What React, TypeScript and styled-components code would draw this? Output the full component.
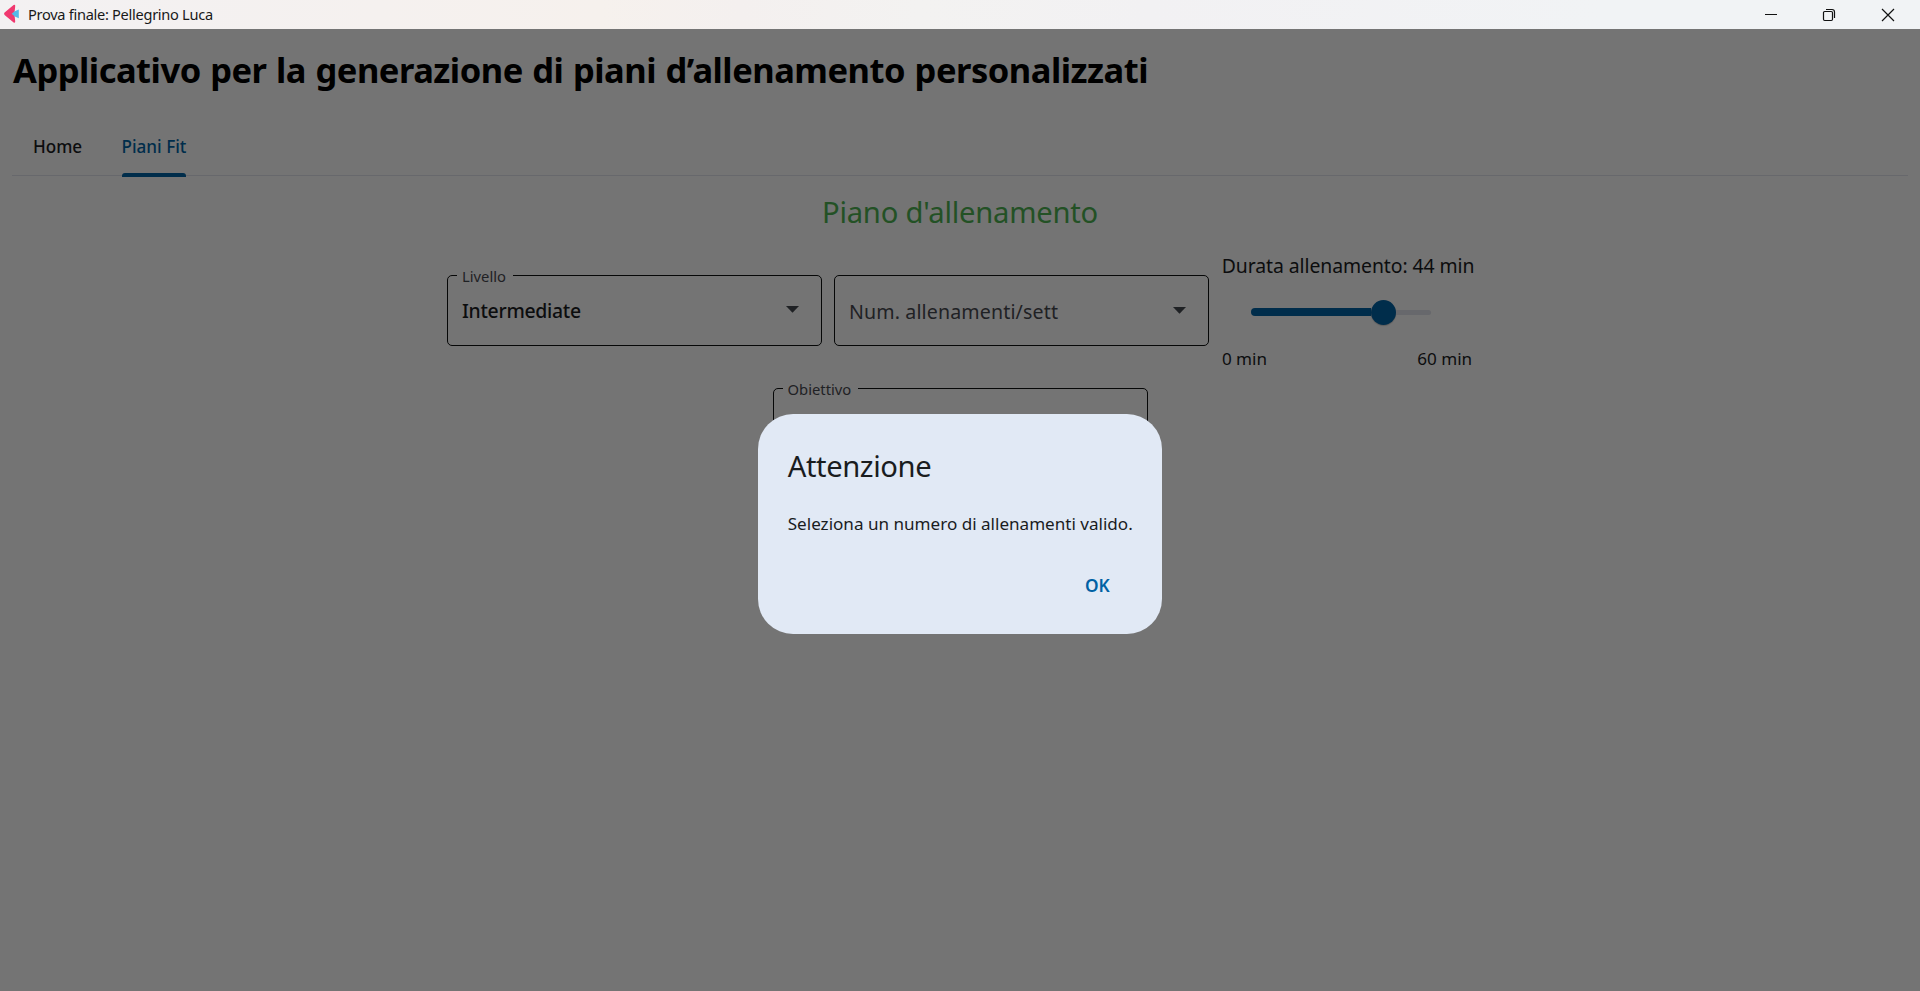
import React from 'react';
import styled, { createGlobalStyle } from 'styled-components';

const GlobalStyle = createGlobalStyle`
  * { box-sizing: border-box; }
  html, body { margin: 0; height: 100%; overflow: hidden; }
  body { font-family: "Noto Sans", "Open Sans", sans-serif; background: #747474; }
`;

const Window = styled.div`
  display: flex;
  flex-direction: column;
  width: 100%;
  height: 991px;
`;

const TitleBar = styled.header`
  display: flex;
  align-items: center;
  justify-content: space-between;
  height: 29px;
  flex: none;
  padding: 0 3px 0 4px;
  background: linear-gradient(90deg, #f3f1f2 0, #f5f1ef 380px, #f6f1ed 600px, #f4f0ef 740px, #f3f2f1 920px, #f2f1f3 1150px, #f1f3f5 1600px);
`;

const Caption = styled.div`
  display: flex;
  align-items: center;
  gap: 8px;
  height: 27px;
  margin-bottom: 2px;
  font-size: 14.6px;
  line-height: 20px;
  letter-spacing: -0.293px;
  color: #191919;
`;

const WindowButtons = styled.div`
  display: flex;
`;

const WindowButton = styled.button`
  display: flex;
  align-items: center;
  justify-content: center;
  width: 58.5px;
  height: 28px;
  padding: 0;
  border: 0;
  background: none;
`;

const Page = styled.main`
  position: relative;
  flex: 1;
  display: flex;
  flex-direction: column;
  padding: 17px 12px 0;
  background: #747474;
`;

const PageTitle = styled.h1`
  margin: 0 0 23px 1px;
  font-size: 34.5px;
  line-height: 48px;
  font-weight: 700;
  letter-spacing: -0.49px;
  word-spacing: 1px;
  color: #000;
`;

const TabBar = styled.nav`
  display: flex;
  gap: 39.5px;
  height: 59px;
  padding: 18px 21px 0;
  border-bottom: 1px solid #67686c;
`;

const Tab = styled.div<{ $active?: boolean }>`
  height: 42px;
  font-size: 17.1px;
  line-height: 24px;
  font-weight: 500;
  letter-spacing: ${p => (p.$active ? '0' : '-0.05px')};
  color: ${p => (p.$active ? '#002d4b' : '#0c0d0e')};
  &::after {
    content: '';
    display: block;
    height: 4px;
    margin-top: 14px;
    border-radius: 3px 3px 0 0;
    background: ${p => (p.$active ? '#002d4b' : 'transparent')};
  }
`;

const SectionTitle = styled.h2`
  margin: 16px 0 0;
  text-align: center;
  font-size: 29.2px;
  line-height: 40px;
  font-weight: 400;
  letter-spacing: -0.24px;
  color: #235125;
`;

const Filters = styled.section`
  display: flex;
  justify-content: center;
  gap: 12px;
  margin-top: 20px;
`;

const GoalRow = styled.section`
  display: flex;
  justify-content: center;
  margin-top: 7px;
`;

const Field = styled.fieldset<{ $labelled?: boolean; $top: number }>`
  width: 375px;
  height: ${p => (p.$labelled ? '81px' : '71px')};
  margin: ${p => p.$top}px 0 0;
  padding: 0 22px 0 14px;
  border: 1px solid #060707;
  border-radius: 5px;
  min-width: 0;
`;

const FieldLabel = styled.legend`
  height: 20px;
  margin-left: -5px;
  padding: 0 7px 0 5px;
  font-size: 14.8px;
  line-height: 22px;
  color: #1f2124;
`;

const FieldBody = styled.div<{ $top: number; $filled?: boolean }>`
  display: flex;
  align-items: center;
  justify-content: space-between;
  padding-top: ${p => p.$top}px;
  font-size: ${p => (p.$filled ? '19.4px' : '19.6px')};
  line-height: 28px;
  font-weight: ${p => (p.$filled ? 500 : 400)};
  letter-spacing: ${p => (p.$filled ? '-0.28px' : '0.13px')};
  color: ${p => (p.$filled ? '#0c0d0e' : '#1f2124')};
`;

const ArrowIcon = styled.svg`
  display: block;
  margin-bottom: 3px;
`;

const Duration = styled.div`
  display: flex;
  flex-direction: column;
  width: 252px;
`;

const DurationLabel = styled.div`
  padding-left: 0.7px;
  font-size: 19.4px;
  line-height: 28px;
  letter-spacing: -0.07px;
  white-space: nowrap;
  color: #0c0d0e;
`;

const Slider = styled.div`
  display: flex;
  align-items: center;
  height: 26px;
  margin: 19px 0 0 30px;
`;

const ActiveTrack = styled.div`
  width: 120px;
  height: 8px;
  border-radius: 4px 0 0 4px;
  background: #002d4b;
`;

const Thumb = styled.div`
  width: 25px;
  height: 25px;
  border-radius: 50%;
  background: #002d4b;
  box-shadow: 0 1px 1px rgba(0, 0, 0, 0.2);
`;

const RestTrack = styled.div`
  width: 35px;
  height: 5px;
  border-radius: 0 3px 3px 0;
  background: #67686c;
`;

const Range = styled.div`
  display: flex;
  justify-content: space-between;
  margin-top: 22px;
  padding: 0 1px;
  font-size: 17.1px;
  line-height: 24px;
  letter-spacing: -0.05px;
  color: #0c0d0e;
`;

const Scrim = styled.div`
  position: absolute;
  inset: 0;
  display: flex;
  align-items: flex-start;
  justify-content: center;
  padding-top: 385px;
`;

const Dialog = styled.div`
  display: flex;
  flex-direction: column;
  width: 404.5px;
  height: 220px;
  padding: 32px 30px 0;
  border-radius: 35px;
  background: #e1e9f5;
  color: #1a1c1e;
`;

const DialogTitle = styled.h3`
  margin: 0;
  font-size: 29.2px;
  line-height: 40px;
  font-weight: 400;
  letter-spacing: -0.42px;
`;

const DialogText = styled.p`
  margin: 26px 0 0;
  font-size: 17.1px;
  line-height: 24px;
  letter-spacing: -0.01px;
  white-space: nowrap;
`;

const DialogActions = styled.div`
  display: flex;
  justify-content: flex-end;
  margin-top: 38px;
  padding-right: 22.5px;
`;

const DialogButton = styled.button`
  padding: 0;
  border: 0;
  background: none;
  font: 600 17.3px/24px "Noto Sans", sans-serif;
  color: #0061a4;
`;

const Logo = () => (
  <svg width="16" height="20" viewBox="0 0 16 20">
    <path d="M.6 8.6 9.6 .9Q11.4 .1 11.2 2.2L10.4 10 11.2 17.2Q11.4 19.3 9.6 18.4L.6 11Q-.4 9.8 .6 8.6Z" fill="#f0386f" />
    <path d="M7.6 9.8 10.8 7.2 14.8 5.4V14.3L10.8 12.4Z" fill="#55b9e8" />
  </svg>
);

const Arrow = () => (
  <ArrowIcon width="13" height="7" viewBox="0 0 13 7">
    <path d="M0 0H13L6.5 6.7Z" fill="#1f2124" />
  </ArrowIcon>
);

export default function App() {
  return (
    <Window>
      <GlobalStyle />
      <TitleBar>
        <Caption>
          <Logo />
          Prova finale: Pellegrino Luca
        </Caption>
        <WindowButtons>
          <WindowButton aria-label="Riduci">
            <svg width="14" height="14" viewBox="0 0 14 14" shapeRendering="crispEdges">
              <path d="M1 6H13V7H1Z" fill="#111" />
            </svg>
          </WindowButton>
          <WindowButton aria-label="Ripristina">
            <svg width="14" height="14" viewBox="0 0 14 14" fill="none" stroke="#111" strokeWidth="1.2">
              <rect x="1.5" y="3.5" width="9" height="9" rx="1.2" />
              <path d="M4 1.5H10Q12.5 1.5 12.5 4V10" />
            </svg>
          </WindowButton>
          <WindowButton aria-label="Chiudi">
            <svg width="14" height="14" viewBox="0 0 14 14" stroke="#111" strokeWidth="1.2">
              <path d="M1 1 13 13M13 1 1 13" />
            </svg>
          </WindowButton>
        </WindowButtons>
      </TitleBar>
      <Page>
        <PageTitle>Applicativo per la generazione di piani d’allenamento personalizzati</PageTitle>
        <TabBar>
          <Tab>Home</Tab>
          <Tab $active>Piani Fit</Tab>
        </TabBar>
        <SectionTitle>Piano d'allenamento</SectionTitle>
        <Filters>
          <Field $labelled $top={13}>
            <FieldLabel>Livello</FieldLabel>
            <FieldBody $top={12} $filled>
              Intermediate
              <Arrow />
            </FieldBody>
          </Field>
          <Field $top={23}>
            <FieldBody $top={22}>
              Num. allenamenti/sett
              <Arrow />
            </FieldBody>
          </Field>
          <Duration>
            <DurationLabel>Durata allenamento: 44 min</DurationLabel>
            <Slider>
              <ActiveTrack />
              <Thumb />
              <RestTrack />
            </Slider>
            <Range>
              <span>0 min</span>
              <span>60 min</span>
            </Range>
          </Duration>
        </Filters>
        <GoalRow>
          <Field $labelled $top={0}>
            <FieldLabel>Obiettivo</FieldLabel>
          </Field>
        </GoalRow>
        <Scrim>
          <Dialog role="dialog">
            <DialogTitle>Attenzione</DialogTitle>
            <DialogText>Seleziona un numero di allenamenti valido.</DialogText>
            <DialogActions>
              <DialogButton>OK</DialogButton>
            </DialogActions>
          </Dialog>
        </Scrim>
      </Page>
    </Window>
  );
}
